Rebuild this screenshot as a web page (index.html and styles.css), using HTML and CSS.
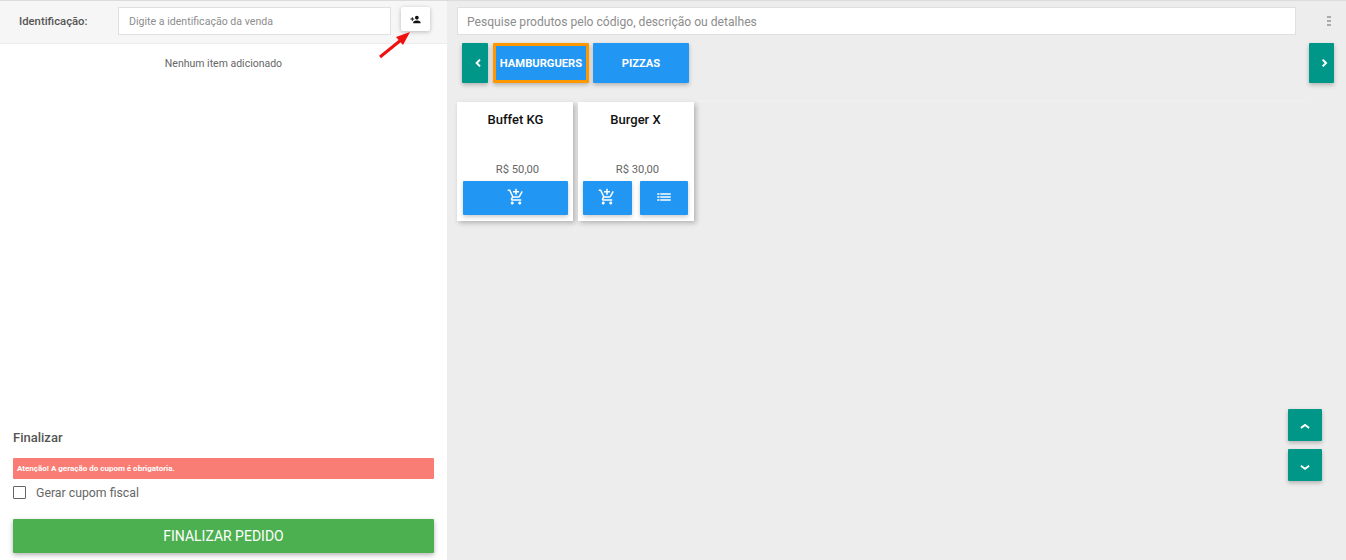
FILE: index.html
```html
<!DOCTYPE html>
<html lang="pt-BR">
<head>
    <meta charset="UTF-8">
    <meta name="viewport" content="width=device-width, initial-scale=1.0">
    <title>Pedido</title>
    <link rel="stylesheet" href="styles.css">
</head>
<body>
    <div class="page">
        <aside class="sale">
            <div class="ident">
                <label class="ident-label" for="ident">Identificação:</label>
                <input class="ident-input" type="text" id="ident" placeholder="Digite a identificação da venda">
                <button class="ident-btn" type="button">
                    <svg width="11" height="11" viewBox="0 0 24 24"><path d="M15 12c2.210 0 4-1.790 4-4s-1.790-4-4-4-4 1.790-4 4 1.790 4 4 4zm-9-2V7H4v3H1v2h3v3h2v-3h3v-2H6zm9 4c-2.670 0-8 1.340-8 4v2h16v-2c0-2.660-5.330-4-8-4z" fill="#111"/></svg>
                </button>
                <svg class="arrow" width="40" height="36" viewBox="0 0 40 36"><path d="M2 32L23 15" stroke="#f01010" stroke-width="3" fill="none"/><path d="M32 7L18 12l7 8z" fill="#f01010"/></svg>
            </div>
            <p class="empty">Nenhum item adicionado</p>
            <div class="finish">
                <h4 class="finish-title">Finalizar</h4>
                <div class="alert">Atenção! A geração do cupom é obrigatoria.</div>
                <label class="check"><input type="checkbox"><span>Gerar cupom fiscal</span></label>
                <button class="finish-btn" type="button">FINALIZAR PEDIDO</button>
            </div>
        </aside>
        <main class="catalog">
            <div class="search-row">
                <input class="search" type="text" placeholder="Pesquise produtos pelo código, descrição ou detalhes">
                <div class="dots"><i></i><i></i><i></i></div>
            </div>
            <div class="cats">
                <button class="nav-btn" type="button">
                    <svg width="16" height="16" viewBox="0 0 24 24"><path d="M15 7l-5 5 5 5" stroke="#fff" stroke-width="3" fill="none"/></svg>
                </button>
                <button class="cat cat-active" type="button">HAMBURGUERS</button>
                <button class="cat" type="button">PIZZAS</button>
                <button class="nav-btn nav-next" type="button">
                    <svg width="16" height="16" viewBox="0 0 24 24"><path d="M10 7l5 5-5 5" stroke="#fff" stroke-width="3" fill="none"/></svg>
                </button>
            </div>
            <hr class="divider">
            <div class="products">
                <div class="product">
                    <div class="product-name">Buffet KG</div>
                    <div class="product-price">R$ 50,00</div>
                    <div class="product-actions">
                        <button class="act" type="button">
                            <svg width="18" height="18" viewBox="0 0 24 24"><path d="M11 9h2V6h3V4h-3V1h-2v3H8v2h3v3zm-4 9c-1.100 0-1.990.9-1.990 2S5.900 22 7 22s2-.9 2-2-.9-2-2-2zm10 0c-1.100 0-1.990.9-1.990 2s.89 2 1.990 2 2-.9 2-2-.9-2-2-2zm-9.830-3.250l.03-.12.9-1.630h7.450c.75 0 1.410-.41 1.750-1.030l3.860-7.010L19.420 4h-.01l-1.100 2-2.760 5H8.530l-.13-.27L6.160 6l-.95-2-.94-2H1v2h2l3.600 7.590-1.350 2.450c-.16.28-.25.61-.25.960 0 1.100.9 2 2 2h12v-2H7.420c-.13 0-.25-.11-.25-.25z" fill="#fff"/></svg>
                        </button>
                    </div>
                </div>
                <div class="product">
                    <div class="product-name">Burger X</div>
                    <div class="product-price">R$ 30,00</div>
                    <div class="product-actions">
                        <button class="act" type="button">
                            <svg width="18" height="18" viewBox="0 0 24 24"><path d="M11 9h2V6h3V4h-3V1h-2v3H8v2h3v3zm-4 9c-1.100 0-1.990.9-1.990 2S5.900 22 7 22s2-.9 2-2-.9-2-2-2zm10 0c-1.100 0-1.990.9-1.990 2s.89 2 1.990 2 2-.9 2-2-.9-2-2-2zm-9.830-3.250l.03-.12.9-1.630h7.450c.75 0 1.410-.41 1.750-1.030l3.860-7.010L19.420 4h-.01l-1.100 2-2.760 5H8.530l-.13-.27L6.160 6l-.95-2-.94-2H1v2h2l3.600 7.590-1.350 2.450c-.16.28-.25.61-.25.960 0 1.100.9 2 2 2h12v-2H7.420c-.13 0-.25-.11-.25-.25z" fill="#fff"/></svg>
                        </button>
                        <button class="act" type="button">
                            <svg width="18" height="18" viewBox="0 0 24 24"><path d="M3 13h3v-2H3v2zm0 4h3v-2H3v2zm0-8h3V7H3v2zm4 4h14v-2H7v2zm0 4h14v-2H7v2zM7 7v2h14V7H7z" fill="#fff"/></svg>
                        </button>
                    </div>
                </div>
            </div>
            <div class="scroll-btns">
                <button class="scroll-btn" type="button">
                    <svg width="18" height="18" viewBox="0 0 24 24"><path d="M6.500 16l5.500-4 5.500 4" stroke="#fff" stroke-width="2.500" fill="none"/></svg>
                </button>
                <button class="scroll-btn" type="button">
                    <svg width="18" height="18" viewBox="0 0 24 24"><path d="M6.500 13l5.500 4 5.500-4" stroke="#fff" stroke-width="2.500" fill="none"/></svg>
                </button>
            </div>
        </main>
    </div>
</body>
</html>
```

FILE: styles.css
```css
* {
    box-sizing: border-box;
}

html, body {
    height: 100%;
}

body {
    margin: 0;
    font-family: Roboto, "Liberation Sans", sans-serif;
    background-color: #ededed;
    color: #555;
    overflow: hidden;
}

button {
    font-family: inherit;
    border: none;
    cursor: pointer;
    padding: 0;
    display: flex;
    align-items: center;
    justify-content: center;
}

.page {
    display: flex;
    height: 560px;
    border-top: 1px solid #dcdcdc;
}

.sale {
    width: 447px;
    background: #fff;
    display: flex;
    flex-direction: column;
}

.ident {
    position: relative;
    height: 43px;
    flex: none;
    background: #f6f6f6;
    border-bottom: 1px solid #ececec;
    display: flex;
    align-items: flex-start;
    padding: 6px 0 0 19px;
}

.ident-label {
    width: 99px;
    font-size: 11.3px;
    font-weight: 500;
    line-height: 30px;
    color: #555;
}

.ident-input {
    width: 273px;
    height: 28px;
    padding: 0 10px;
    font-family: inherit;
    font-size: 10.6px;
    border: 1px solid #e0e0e0;
    background: #fff;
    outline: none;
}

.ident-input::placeholder, .search::placeholder {
    color: #8d8d8d;
    opacity: 1;
}

.ident-btn {
    width: 29px;
    height: 24px;
    margin-left: 10px;
    background: #fff;
    border-radius: 2px;
    box-shadow: 0 1px 4px rgba(0, 0, 0, 0.25);
}

.arrow {
    position: absolute;
    left: 378px;
    top: 24px;
}

.empty {
    margin: 13px 0 0;
    font-size: 10.5px;
    line-height: 13px;
    text-align: center;
    color: #666;
}

.finish {
    margin-top: auto;
    padding: 0 13px 7px;
}

.finish-title {
    margin: 0 0 13px;
    font-size: 13px;
    font-weight: 500;
    line-height: 15px;
    color: #555;
}

.alert {
    height: 21px;
    padding-left: 4px;
    background: #fa7d75;
    border-radius: 1px;
    color: #fff;
    font-size: 8px;
    font-weight: 700;
    line-height: 21px;
}

.check {
    display: flex;
    align-items: center;
    height: 14px;
    margin-top: 6px;
    font-size: 12.3px;
    color: #666;
}

.check span {
    padding-top: 2px;
}

.check input {
    appearance: none;
    width: 13px;
    height: 13px;
    margin: 0 10px 0 0;
    border: 1.3px solid #666;
    border-radius: 1px;
    background: #fff;
}

.finish-btn {
    width: 100%;
    height: 34px;
    margin-top: 20px;
    background: #4caf50;
    color: #fff;
    font-size: 14px;
    font-weight: 400;
    border-radius: 1px;
    box-shadow: 0 2px 5px rgba(0, 0, 0, 0.3);
}

.catalog {
    flex: 1;
    position: relative;
    padding: 6px 12px 0 10px;
}

.search-row {
    display: flex;
    align-items: center;
}

.search {
    width: 839px;
    height: 28px;
    padding: 2px 9px 0;
    font-family: inherit;
    font-size: 12.1px;
    border: 1px solid #e0e0e0;
    background: #fff;
    outline: none;
}

.dots {
    margin-left: 31px;
    display: flex;
    flex-direction: column;
    gap: 1.5px;
}

.dots i {
    display: block;
    width: 4px;
    height: 2.5px;
    background: #aaa;
}

.cats {
    display: flex;
    align-items: stretch;
    height: 40px;
    margin: 8px 0 0 5px;
    gap: 4px;
}

.nav-btn {
    width: 26px;
    padding-left: 5px;
    padding-bottom: 1px;
    margin-right: 1px;
    background: #009688;
    border-radius: 1px;
    box-shadow: 0 2px 4px rgba(0, 0, 0, 0.25);
}

.nav-next {
    width: 25px;
    margin: 0 0 0 auto;
}

.cat {
    width: 96px;
    background: #2196f3;
    color: #fff;
    font-size: 11.2px;
    font-weight: 700;
    border-radius: 1px;
    box-shadow: 0 2px 4px rgba(0, 0, 0, 0.25);
}

.cat-active {
    border: 3px solid #ff9800;
}

.divider {
    width: 848px;
    height: 2px;
    margin: 17px 0 0;
    border: none;
    background: #f0f0f0;
}

.products {
    display: flex;
    gap: 5px;
}

.product {
    width: 116px;
    height: 119px;
    background: #fff;
    padding: 11px 5px 0 6px;
    display: flex;
    flex-direction: column;
    box-shadow: 2px 2px 5px rgba(0, 0, 0, 0.25);
}

.product + .product {
    padding: 11px 6px 0 5px;
}

.product-name {
    height: 40px;
    font-size: 13px;
    font-weight: 500;
    line-height: 14px;
    text-align: center;
    color: #111;
}

.product-price {
    margin-top: 10px;
    padding-left: 4px;
    font-size: 11.2px;
    line-height: 13px;
    text-align: center;
    color: #666;
}

.product-actions {
    display: flex;
    gap: 8px;
    margin-top: 5px;
}

.act {
    flex: 1;
    height: 34px;
    padding-bottom: 2px;
    background: #2196f3;
    border-radius: 1px;
    box-shadow: 0 2px 4px rgba(0, 0, 0, 0.2);
}

.scroll-btns {
    position: absolute;
    right: 24px;
    top: 408px;
    display: flex;
    flex-direction: column;
    gap: 8px;
}

.scroll-btn {
    width: 34px;
    height: 32px;
    background: #009688;
    border-radius: 1px;
    box-shadow: 0 2px 4px rgba(0, 0, 0, 0.25);
}
```
